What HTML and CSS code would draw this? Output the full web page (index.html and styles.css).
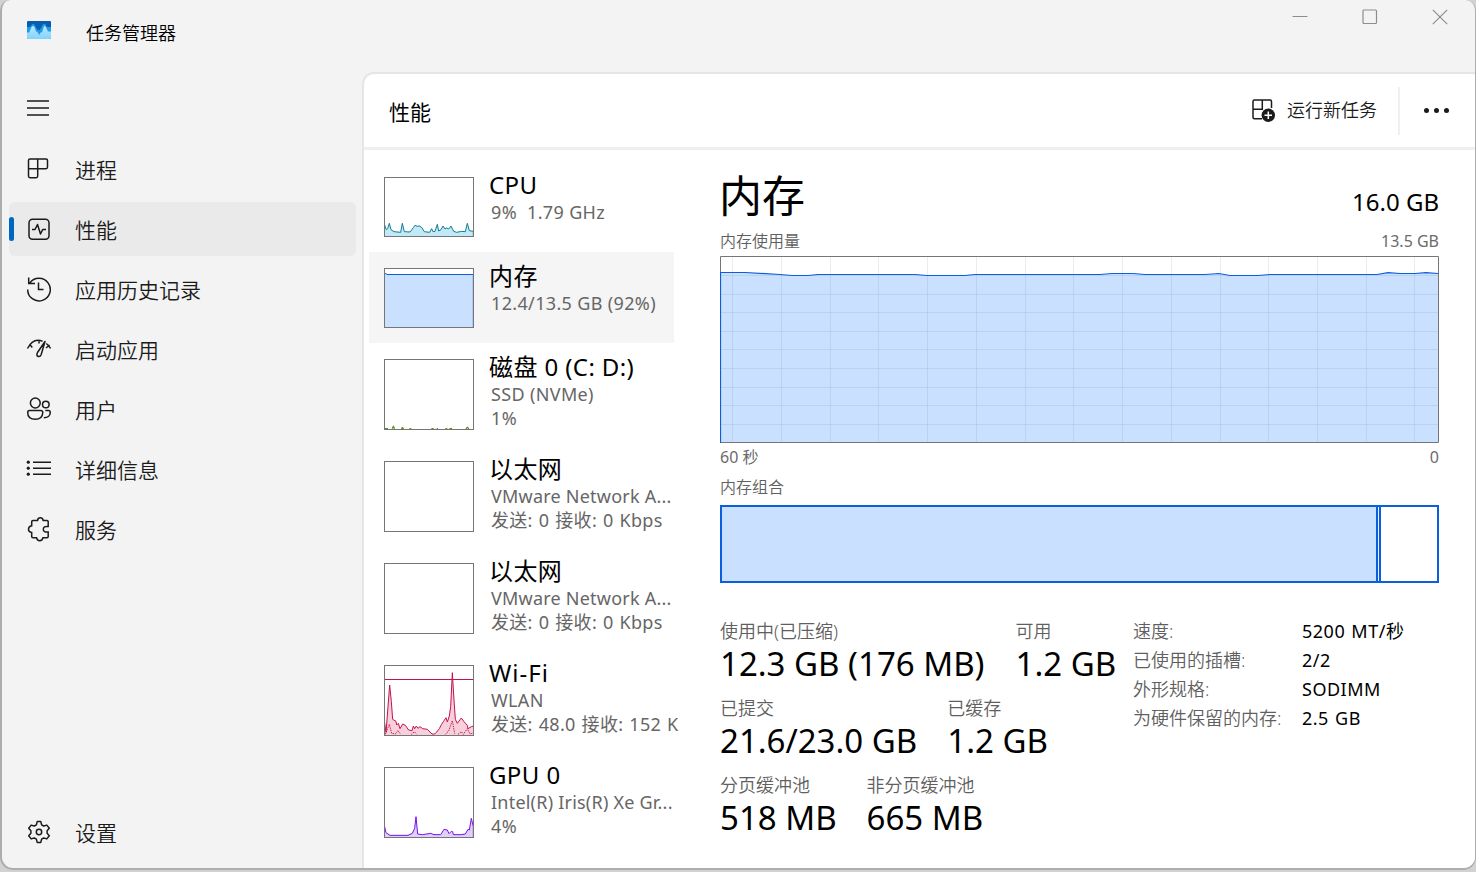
FILE: index.html
```html
<!DOCTYPE html>
<html lang="zh-CN">
<head>
    <meta charset="utf-8">
    <title>任务管理器</title>
    <link rel="stylesheet" href="styles.css">
</head>
<body>
<div class="window">
    <header class="titlebar">
        <svg class="app-icon" width="24" height="18" viewBox="0 0 24 18">
            <defs>
                <linearGradient id="appFront" x1="0" y1="0" x2="0" y2="1">
                    <stop offset="0" stop-color="#b9e7fe"/>
                    <stop offset="1" stop-color="#84d2fc"/>
                </linearGradient>
                <clipPath id="appClip"><rect width="24" height="18" rx="1"/></clipPath>
            </defs>
            <g clip-path="url(#appClip)">
                <rect width="24" height="18" fill="#0c5cae"/>
                <path d="M0 6H3L5 3.500Q6.300 2 7.800 4L9.500 7.500 12 9.500 14 7 15.500 4Q17.300 1.500 19 4L20 6H24V18H0Z" fill="#1f9ae8"/>
                <path d="M0 11.500H2.200L4.500 6Q6 4 7.500 6L9.200 11 10 10.500 12.300 14 14 11 15 11.500 16.800 5.500Q18.200 4 19.300 7L21 10.500H24V18H0Z" fill="url(#appFront)"/>
            </g>
        </svg>
        <span class="app-title">任务管理器</span>
        <div class="controls">
            <svg width="16" height="16" viewBox="0 0 16 16"><path d="M.5 7.500H15.500"/></svg>
            <svg width="16" height="16" viewBox="0 0 16 16"><rect x="1" y="1" width="13.500" height="13.500" rx="1"/></svg>
            <svg width="16" height="16" viewBox="0 0 16 16"><path d="M.8 .8L15.200 15.200M15.200 .8L.8 15.200"/></svg>
        </div>
    </header>

    <nav class="sidebar">
        <div class="burger">
            <svg width="26" height="26" viewBox="0 0 26 26"><path d="M2 6H24M2 13H24M2 20H24"/></svg>
        </div>
        <a class="nav-item">
            <svg width="26" height="26" viewBox="0 0 26 26"><path d="M5 3H21Q22.500 3 22.500 4.500V11Q22.500 12.700 21 12.700H3.500V4.500Q3.500 3 5 3ZM3.500 12.700V20Q3.500 21.700 5 21.700H11.200Q12.700 21.700 12.700 20V3"/></svg>
            <span>进程</span>
        </a>
        <a class="nav-item active">
            <svg width="26" height="26" viewBox="0 0 26 26"><rect x="4" y="3.200" width="20" height="20" rx="3.500"/><path d="M7 13.500H10L12.500 8.500 15.500 18 17.700 13.500H21" stroke-linejoin="round"/></svg>
            <span>性能</span>
        </a>
        <a class="nav-item">
            <svg width="26" height="26" viewBox="0 0 26 26"><path d="M2.700 13.500A11.300 11.300 0 1 0 4.700 7.200M3.700 1.500V7.500H10M13.500 6.500V13.500H18.500"/></svg>
            <span>应用历史记录</span>
        </a>
        <a class="nav-item">
            <svg width="26" height="26" viewBox="0 0 26 26"><path d="M2.500 12.500Q8 1.500 17.500 5.200M4.500 8.300L7.300 11.500M14 4.500V7.500M21.300 7.500Q24 9.500 25.500 12.500M24.500 9L21 12M20 5.500L12.500 16.500Q11 19.500 13.200 20.500Q15.300 21 16.200 18.500L20 5.500Z" stroke-linejoin="round"/></svg>
            <span>启动应用</span>
        </a>
        <a class="nav-item">
            <svg width="26" height="26" viewBox="0 0 26 26"><circle cx="10.300" cy="7" r="4.900"/><circle cx="20.800" cy="8.500" r="3.300"/><path d="M4.500 14.500H15.500Q17.800 14.500 17.800 16.500Q17.500 23.300 10.300 23.300Q2.700 23.300 2.700 16.500Q2.700 14.500 4.500 14.500ZM20.300 14.500H23.500Q25.300 14.500 25.300 16.500Q25 21.800 18.800 21.800"/></svg>
            <span>用户</span>
        </a>
        <a class="nav-item">
            <svg width="26" height="26" viewBox="0 0 26 26"><path d="M8 6.200H26M8 12.200H26M8 18.200H26"/><g class="solid"><circle cx="3.300" cy="6.200" r="1.600"/><circle cx="3.300" cy="12.200" r="1.600"/><circle cx="3.300" cy="18.200" r="1.600"/></g></svg>
            <span>详细信息</span>
        </a>
        <a class="nav-item">
            <svg width="26" height="26" viewBox="0 0 26 26"><path d="M8 4.500H12.500Q13 1.800 15.300 1.800Q17.700 1.800 18.200 4.500H22Q23.200 4.500 23.200 5.700V10.500Q18.300 10 18.300 13.300Q18.300 16.500 23.200 16V20.500Q23.200 21.700 22 21.700H18Q17.500 24.700 14.700 24.700Q12 24.700 11.500 21.700H8Q6.700 21.700 6.700 20.500V16.500Q3.500 16 3.500 13.300Q3.500 10.500 6.700 9.800V5.700Q6.700 4.500 8 4.500Z"/></svg>
            <span>服务</span>
        </a>
        <a class="nav-item settings">
            <svg width="26" height="26" viewBox="0 0 26 26"><g transform="translate(1 0)"><circle cx="13" cy="13" r="2.700"/><path d="M11.200 2.600H14.800L15.600 5.800 17.700 7 20.800 6.100 23.300 9.300 21.100 11.700V14.300L23.300 16.700 20.800 19.900 17.700 19 15.600 20.200 14.800 23.400H11.200L10.400 20.200 8.300 19 5.200 19.900 2.700 16.700 4.900 14.300V11.700L2.700 9.300 5.200 6.100 8.300 7 10.400 5.800Z" stroke-linejoin="round"/></g></svg>
            <span>设置</span>
        </a>
    </nav>

    <main class="main">
        <div class="page-header">
            <h1>性能</h1>
            <div class="run-task">
                <svg width="24" height="24" viewBox="0 0 24 24">
                    <path d="M10 19.800H2.500Q1 19.800 1 18.300V2.500Q1 1 2.500 1H18Q19.500 1 19.500 2.500V9M1 10.300H10.300V1"/>
                    <circle class="plus-bg" cx="16.300" cy="16.200" r="6.700"/>
                    <path class="plus" d="M16.300 12.500V20M12.500 16.200H20"/>
                </svg>
                <span>运行新任务</span>
            </div>
            <div class="more"><i></i><i></i><i></i></div>
        </div>

        <div class="content">
            <div class="devices">
                <div class="device">
                    <svg class="thumb cpu" width="90" height="60" viewBox="0 0 270 180">
                        <path d="M1.500 180V143L7 158 11 155 16 139 21 158 30 164 50 166 55 139 61 164 78 165 88 152 93 145 100 148 106 147 113 151 121 164 137 166 143 155 147 164 153 163 160 142 164 162 171 158 177 147 183 156 188 153 194 156 201 147 209 163 218 166 233 163 244 164 250 139 256 161 268 163V180Z"/>
                    </svg>
                    <div class="info"><b>CPU</b><span>9%&nbsp; 1.79 GHz</span></div>
                </div>
                <div class="device selected">
                    <svg class="thumb mem" width="90" height="60" viewBox="0 0 270 180">
                        <path d="M1.500 180V17H6L9 19.500H268V180Z"/>
                    </svg>
                    <div class="info"><b>内存</b><span>12.4/13.5 GB (92%)</span></div>
                </div>
                <div class="device">
                    <svg class="thumb disk" width="90" height="71" viewBox="0 0 270 213">
                        <path d="M0 209H12M25 209L28 203 32 209M52 209L55 206 59 209M76 209H82M142 209H149M158 209H162M184 209H190M196 209H204M246 209L250 205 255 209"/>
                    </svg>
                    <div class="info"><b>磁盘 0 (C: D:)</b><span>SSD (NVMe)</span><span>1%</span></div>
                </div>
                <div class="device">
                    <svg class="thumb" width="90" height="71" viewBox="0 0 270 213"></svg>
                    <div class="info"><b>以太网</b><span class="name">VMware Network A...</span><span class="rate">发送: 0 接收: 0 Kbps</span></div>
                </div>
                <div class="device">
                    <svg class="thumb" width="90" height="71" viewBox="0 0 270 213"></svg>
                    <div class="info"><b>以太网</b><span class="name">VMware Network A...</span><span class="rate">发送: 0 接收: 0 Kbps</span></div>
                </div>
                <div class="device">
                    <svg class="thumb wifi" width="90" height="71" viewBox="0 0 270 213">
                        <path class="level" d="M0 43.500H270"/>
                        <path d="M1.500 213V171L6 202 12 125 17 60 22 110 26 163 36 169 38 180 43 175 48 191 56 177 64 181 74 195 84 197 88 183 92 191 97 183 102 190 108 185 116 191 130 193 144 207 152 207 158 201 166 191 172 179 178 170 186 158 190 171 196 153 200 125 205 23 210 105 214 163 220 175 232 159 240 170 250 181 252 191 262 185 269 183V213Z"/>
                        <path class="send" d="M4 208L16 178 23 205 34 207 42 197 50 208M82 208L91 200 98 208M184 208L194 198 205 167 212 206M222 208L232 200 238 208 250 191 258 207 268 204"/>
                    </svg>
                    <div class="info"><b class="wide">Wi-Fi</b><span>WLAN</span><span class="rate">发送: 48.0 接收: 152 K</span></div>
                </div>
                <div class="device">
                    <svg class="thumb gpu" width="90" height="71" viewBox="0 0 270 213">
                        <path d="M1.500 213V177L6 197 18 205H72L85 199 92 184 96 149 101 201 115 203 140 199 150 203H170L180 187 190 189 195 200 202 193 206 194 208 203H230L244 201 252 187 256 189 262 154 268 179V213Z"/>
                    </svg>
                    <div class="info"><b>GPU 0</b><span class="name">Intel(R) Iris(R) Xe Gr...</span><span>4%</span></div>
                </div>
            </div>

            <section class="detail">
                <div class="detail-head">
                    <h2>内存</h2>
                    <span class="capacity">16.0 GB</span>
                </div>
                <div class="caption"><span>内存使用量</span><span class="num">13.5 GB</span></div>
                <svg class="chart" width="719" height="187" viewBox="0 0 719 187">
                    <path class="area" d="M.5 187V16.500H25L60 18.500 72 19.500H88L98 18.500H195L207 19.500H245L255 18.500H380L392 17.500H413L425 18.500H485L499 17.500 510 19.500H538L550 18.500H657L668 16.700 680 17.500H695L706 16.700 718 17.500V187Z"/>
                    <path class="grid" d="M12.500 0V187M61.500 0V187M110.500 0V187M158.500 0V187M207.500 0V187M256.500 0V187M305.500 0V187M353.500 0V187M402.500 0V187M451.500 0V187M500.500 0V187M548.500 0V187M597.500 0V187M646.500 0V187M694.500 0V187M0 19.500H719M0 38.500H719M0 56.500H719M0 75.500H719M0 93.500H719M0 112.500H719M0 131.500H719M0 149.500H719M0 168.500H719"/>
                    <path class="line" d="M.5 187V16.500H25L60 18.500 72 19.500H88L98 18.500H195L207 19.500H245L255 18.500H380L392 17.500H413L425 18.500H485L499 17.500 510 19.500H538L550 18.500H657L668 16.700 680 17.500H695L706 16.700 718 17.500"/>
                    <path class="frame" d="M.5 16V.5H718.500V186.500H1"/>
                </svg>
                <div class="caption axis"><span class="num">60 秒</span><span class="num">0</span></div>
                <div class="caption"><span>内存组合</span></div>
                <div class="composition">
                    <div class="used"></div>
                    <div class="modified"></div>
                </div>

                <div class="summary">
                    <div class="stats">
                        <div class="stat-row">
                            <div class="stat"><label>使用中(已压缩)</label><strong>12.3 GB (176 MB)</strong></div>
                            <div class="stat"><label>可用</label><strong>1.2 GB</strong></div>
                        </div>
                        <div class="stat-row">
                            <div class="stat"><label>已提交</label><strong>21.6/23.0 GB</strong></div>
                            <div class="stat"><label>已缓存</label><strong>1.2 GB</strong></div>
                        </div>
                        <div class="stat-row">
                            <div class="stat"><label>分页缓冲池</label><strong>518 MB</strong></div>
                            <div class="stat"><label>非分页缓冲池</label><strong>665 MB</strong></div>
                        </div>
                    </div>
                    <dl class="specs">
                        <dt>速度:</dt><dd>5200 MT/秒</dd>
                        <dt>已使用的插槽:</dt><dd>2/2</dd>
                        <dt>外形规格:</dt><dd>SODIMM</dd>
                        <dt>为硬件保留的内存:</dt><dd>2.5 GB</dd>
                    </dl>
                </div>
            </section>
        </div>
    </main>
</div>
</body>
</html>
```
FILE: styles.css
```css
* {
    box-sizing: border-box;
}
body {
    margin: 0;
    width: 1476px;
    height: 872px;
    overflow: hidden;
    background: #d2d2d2;
    color: #000;
    font-family: "Noto Sans", "Noto Sans CJK SC", sans-serif;
    white-space: nowrap;
}
h1, h2, dl, dd {
    margin: 0;
    font-weight: 400;
}
.window {
    display: grid;
    grid-template-columns: 360px 1fr;
    grid-template-rows: 72px 1fr;
    width: 1476px;
    height: 870px;
    overflow: hidden;
    background: #f3f3f3;
    border: solid #adadad;
    border-width: 0 1px 2px 2px;
    border-radius: 10px 10px 13px 13px;
}

/* title bar */
.titlebar {
    grid-column: 1 / 3;
    display: flex;
    align-items: flex-start;
    padding-left: 25px;
}
.app-icon {
    margin-top: 21px;
}
.app-title {
    margin: 20px 0 0 35px;
    font-size: 18px;
    font-weight: 350;
    line-height: 26px;
}
.controls {
    display: flex;
    gap: 54px;
    margin: 9px 27px 0 auto;
}
.controls svg {
    fill: none;
    stroke: #8d8d8d;
    stroke-width: 1.2;
}

/* sidebar */
.sidebar {
    display: flex;
    flex-direction: column;
    gap: 6px;
    padding: 0 6px 9px 7px;
}
.sidebar svg {
    fill: none;
    stroke: #1b1b1b;
    stroke-width: 1.5;
}
.sidebar .solid {
    fill: #1b1b1b;
    stroke: none;
}
.burger {
    height: 64px;
    padding: 23px 0 0 16px;
}
.nav-item {
    position: relative;
    display: flex;
    align-items: center;
    height: 54px;
    padding-left: 16px;
    border-radius: 6px;
    color: #1b1b1b;
    font-size: 21px;
    font-weight: 350;
}
.nav-item span {
    margin-left: 24px;
    line-height: 30px;
    padding-top: 1px;
}
.nav-item.active {
    background: #eaeaea;
}
.nav-item.active::before {
    content: "";
    position: absolute;
    left: 0;
    top: 15px;
    width: 5px;
    height: 24px;
    border-radius: 3px;
    background: #0067c0;
}
.settings {
    margin-top: auto;
}

/* page header */
.main {
    display: flex;
    flex-direction: column;
    background: #fff;
    border: solid #e5e5e5;
    border-width: 2px 0 0 2px;
    border-top-left-radius: 12px;
}
.page-header {
    display: flex;
    align-items: center;
    height: 76px;
    padding: 0 27px 0 25px;
    border-bottom: 3px solid #efefef;
}
.page-header h1 {
    font-size: 21px;
    line-height: 30px;
    padding-top: 2px;
}
.run-task {
    display: flex;
    align-items: center;
    gap: 11px;
    margin-left: auto;
    font-size: 18px;
    font-weight: 350;
    line-height: 24px;
    color: #1b1b1b;
}
.run-task span {
    padding-bottom: 1px;
}
.run-task svg {
    fill: none;
    stroke: #1b1b1b;
    stroke-width: 1.5;
}
.run-task .plus-bg {
    fill: #1b1b1b;
    stroke: none;
}
.run-task .plus {
    stroke: #fff;
}
.more {
    display: flex;
    align-items: center;
    gap: 5px;
    height: 48px;
    margin: 0 -1px 0 21px;
    padding-left: 24px;
    border-left: 2px solid #efefef;
}
.more i {
    width: 5px;
    height: 5px;
    border-radius: 50%;
    background: #1b1b1b;
}

/* device list */
.content {
    display: flex;
    padding-left: 5px;
}
.devices {
    width: 305px;
    padding-top: 11px;
}
.device {
    display: flex;
    padding: 16px 0 15px 15px;
}
.selected {
    background: #f5f5f5;
}
.thumb {
    flex: none;
    background: #fff;
    outline: 1px solid #767676;
    outline-offset: -1px;
    stroke-width: 3;
}
.cpu {
    fill: #c3e9f7;
    stroke: #117d93;
}
.mem {
    fill: #cae0ff;
    stroke: #0b5edc;
}
.disk {
    fill: none;
    stroke: #5c8f10;
    stroke-width: 4;
}
.wifi {
    fill: #f8d0dc;
    stroke: #c2134f;
}
.wifi .send {
    fill: none;
    stroke-dasharray: 4 3;
}
.gpu {
    fill: #dfd0fb;
    stroke: #7b10e8;
}
.info {
    display: flex;
    flex-direction: column;
    height: 60px;
    margin: -6px 0 0 15px;
}
.thumb[height="71"] + .info {
    height: 71px;
}
.info b {
    flex: none;
    margin-bottom: 1px;
    font-size: 24px;
    font-weight: 400;
    line-height: 28px;
    letter-spacing: .4px;
}
.info .wide {
    letter-spacing: 1px;
}
.info span {
    flex: none;
    margin-left: 2px;
    color: #666;
    font-size: 18px;
    line-height: 24px;
    letter-spacing: .35px;
}
.info .name {
    letter-spacing: .22px;
}
.info .rate {
    letter-spacing: .3px;
    word-spacing: 1px;
}

/* memory detail */
.detail {
    width: 719px;
    margin-left: 46px;
}
.detail-head {
    display: flex;
    justify-content: space-between;
    height: 81px;
    padding-top: 16px;
}
.detail-head h2 {
    font-size: 43px;
    line-height: 60px;
    margin-left: -1px;
}
.capacity {
    font-size: 24px;
    line-height: 72px;
}
.caption {
    display: flex;
    justify-content: space-between;
    height: 20px;
    color: #5f5f5f;
    font-size: 16px;
    font-weight: 350;
    line-height: 20px;
}
.caption .num {
    color: #6b6b6b;
    font-weight: 400;
}
.chart {
    display: block;
    margin-top: 5px;
    fill: none;
}
.chart .area {
    fill: #cae0ff;
}
.chart .grid {
    stroke: #5a6a80;
    stroke-opacity: .13;
}
.chart .line {
    stroke: #0b5edc;
    stroke-width: 1.2;
}
.chart .frame {
    stroke: #767676;
}
.axis {
    margin: 4px 0 10px;
}
.composition {
    display: flex;
    height: 78px;
    margin-top: 8px;
    border: 2px solid #0b5edc;
}
.used {
    width: 656px;
    background: #cae0ff;
    border-right: 2px solid #0b5edc;
}
.modified {
    width: 3px;
    background: #e9f1ff;
    border-right: 2px solid #0b5edc;
}

.summary {
    display: flex;
    margin-top: 36px;
}
.stats {
    width: 413px;
    display: flex;
    flex-direction: column;
    gap: 11px;
}
.stat-row {
    display: flex;
    gap: 30px;
}
.stat-row:first-child {
    gap: 31px;
}
.stat label {
    display: block;
    color: #5f5f5f;
    font-size: 18px;
    font-weight: 350;
    line-height: 24px;
}
.stat strong {
    display: block;
    font-size: 33px;
    font-weight: 400;
    line-height: 42px;
}
.specs {
    display: grid;
    grid-template-columns: 169px auto;
    grid-auto-rows: 29px;
    align-content: start;
    margin-top: -2px;
    font-size: 18px;
    line-height: 29px;
}
.specs dt {
    color: #5f5f5f;
    font-weight: 350;
}
.specs dd {
    letter-spacing: .5px;
    word-spacing: 1px;
}
```
